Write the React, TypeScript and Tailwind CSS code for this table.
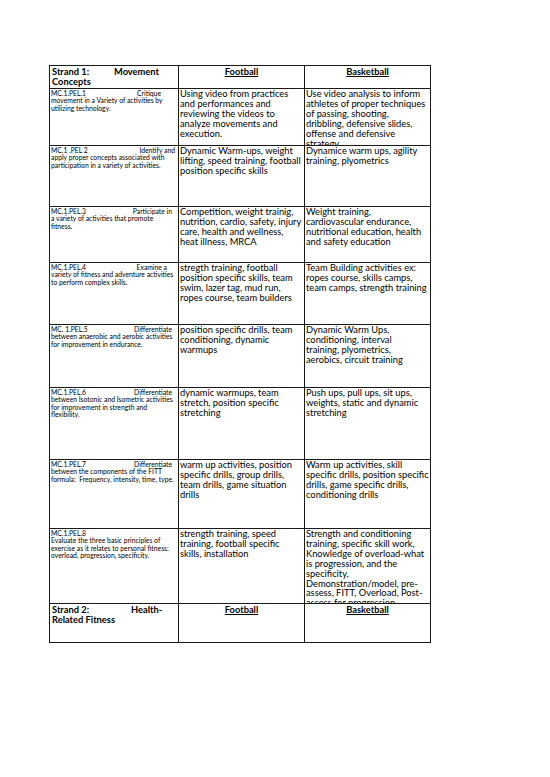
import React from "react";

type Row = {
  h: string;
  code: string;
  verb: string;
  pr: string;
  desc: string[];
  football: string[];
  basketball: string[];
};

const rows: Row[] = [
  {
    h: "h-[57px]",
    code: "MC.1.PEL.1",
    verb: "Critique",
    pr: "pr-[17px]",
    desc: ["movement in a Variety of activities by", "utilizing technology."],
    football: [
      "Using video from practices",
      "and performances and",
      "reviewing the videos to",
      "analyze movements and",
      "execution.",
    ],
    basketball: [
      "Use video analysis to inform",
      "athletes of proper techniques",
      "of passing, shooting,",
      "dribbling, defensive slides,",
      "offense and defensive",
      "strategy",
    ],
  },
  {
    h: "h-[61px]",
    code: "MC.1 .PEL 2",
    verb: "Identify and",
    pr: "pr-[3px]",
    desc: ["apply proper concepts associated with", "participation in a variety of activities."],
    football: ["Dynamic Warm-ups, weight", "lifting, speed training, football", "position specific skills"],
    basketball: ["Dynamice warm ups, agility", "training, plyometrics"],
  },
  {
    h: "h-[56px]",
    code: "MC.1.PEL.3",
    verb: "Participate in",
    pr: "pr-[6px]",
    desc: ["a variety of activities that promote", "fitness."],
    football: [
      "Competition, weight trainig,",
      "nutrition, cardio, safety, injury",
      "care, health and wellness,",
      "heat illness, MRCA",
    ],
    basketball: [
      "Weight training,",
      "cardiovascular endurance,",
      "nutritional education, health",
      "and safety education",
    ],
  },
  {
    h: "h-[62px]",
    code: "MC.1.PEL.4",
    verb: "Examine a",
    pr: "pr-[11px]",
    desc: ["variety of fitness and adventure activities", "to perform complex skills."],
    football: [
      "stregth training, football",
      "position specific skills, team",
      "swim, lazer tag, mud run,",
      "ropes course, team builders",
    ],
    basketball: [
      "Team Building activities ex:",
      "ropes course, skills camps,",
      "team camps, strength training",
    ],
  },
  {
    h: "h-[63px]",
    code: "MC. 1.PEL.5",
    verb: "Differentiate",
    pr: "pr-[6px]",
    desc: ["between anaerobic and aerobic activities", "for improvement in endurance."],
    football: ["position specific drills, team", "conditioning, dynamic", "warmups"],
    basketball: [
      "Dynamic Warm Ups,",
      "conditioning, interval",
      "training, plyometrics,",
      "aerobics, circuit training",
    ],
  },
  {
    h: "h-[72px]",
    code: "MC.1.PEL.6",
    verb: "Differentiate",
    pr: "pr-[6px]",
    desc: [
      "between Isotonic and Isometric activities",
      "for improvement in strength and",
      "flexibility.",
    ],
    football: ["dynamic warmups, team", "stretch, position specific", "stretching"],
    basketball: ["Push ups, pull ups, sit ups,", "weights, static and dynamic", "stretching"],
  },
  {
    h: "h-[69px]",
    code: "MC.1.PEL.7",
    verb: "Differentiate",
    pr: "pr-[6px]",
    desc: ["between the components of the FITT", "formula:  Frequency, intensity, time, type."],
    football: [
      "warm up activities, position",
      "specific drills, group drills,",
      "team drills, game situation",
      "drills",
    ],
    basketball: [
      "Warm up activities, skill",
      "specific drills, position specific",
      "drills, game specific drills,",
      "conditioning drills",
    ],
  },
  {
    h: "h-[75px]",
    code: "MC.1.PEL.8",
    verb: "",
    pr: "pr-[6px]",
    desc: [
      "Evaluate the three basic principles of",
      "exercise as it relates to personal fitness:",
      "overload, progression, specificity.",
    ],
    football: ["strength training, speed", "training, football specific", "skills, installation"],
    basketball: [
      "Strength and conditioning",
      "training, specific skill work,",
      "Knowledge of overload-what",
      "is progression, and the",
      "specificity,",
      "Demonstration/model, pre-",
      "assess, FITT, Overload, Post-",
      "assess for progression",
    ],
  },
];

const cell = "border-r border-b border-[#1a1a1a] overflow-hidden";

function Lines({ lines }: { lines: string[] }) {
  return (
    <div className="pl-px text-[9.3px] leading-[9.9px] text-black">
      {lines.map((l, i) => (
        <div key={i} className="whitespace-pre">
          {l}
        </div>
      ))}
    </div>
  );
}

function HeaderRow({ strand, topic, h, gap }: { strand: string; topic: string[]; h: string; gap: string }) {
  const [first, second] = topic;
  return (
    <>
      <div className={`${cell} ${h} pl-[2px] pt-px font-bold text-[9.3px] leading-[10px]`}>
        <div className="flex whitespace-nowrap">
          <span className={gap}>{strand}</span>
          <span>{first}</span>
        </div>
        <div>{second}</div>
      </div>
      <div className={`${cell} ${h} pt-px text-center font-bold text-[9.3px] leading-[10px]`}>
        <span className="underline">Football</span>
      </div>
      <div className={`${cell} ${h} pt-px text-center font-bold text-[9.3px] leading-[10px]`}>
        <span className="underline">Basketball</span>
      </div>
    </>
  );
}

export default function App() {
  return (
    <div className="w-[550px] h-[777px] bg-white" style={{ fontFamily: "Lato, 'Open Sans', sans-serif" }}>
      <div className="pt-[65px] pl-[49px]">
        <div className="grid grid-cols-[129px_126px_126px] w-[382px] border-l border-t border-[#1a1a1a] text-black">
          <HeaderRow strand="Strand 1:" topic={["Movement", "Concepts"]} h="h-[23px]" gap="w-[62px]" />

          {rows.map((r) => (
            <React.Fragment key={r.code}>
              <div className={`${cell} ${r.h} pl-px pt-px text-[6.8px] leading-[7.3px] text-black`}>
                <div className={`flex justify-between whitespace-nowrap ${r.pr}`}>
                  <span>{r.code}</span>
                  <span>{r.verb}</span>
                </div>
                {r.desc.map((d, i) => (
                  <div key={i} className="whitespace-pre">
                    {d}
                  </div>
                ))}
              </div>
              <div className={`${cell} ${r.h}`}>
                <Lines lines={r.football} />
              </div>
              <div className={`${cell} ${r.h}`}>
                <Lines lines={r.basketball} />
              </div>
            </React.Fragment>
          ))}

          <HeaderRow strand="Strand 2:" topic={["Health-", "Related Fitness"]} h="h-[39px]" gap="w-[79px]" />
        </div>
      </div>
    </div>
  );
}
